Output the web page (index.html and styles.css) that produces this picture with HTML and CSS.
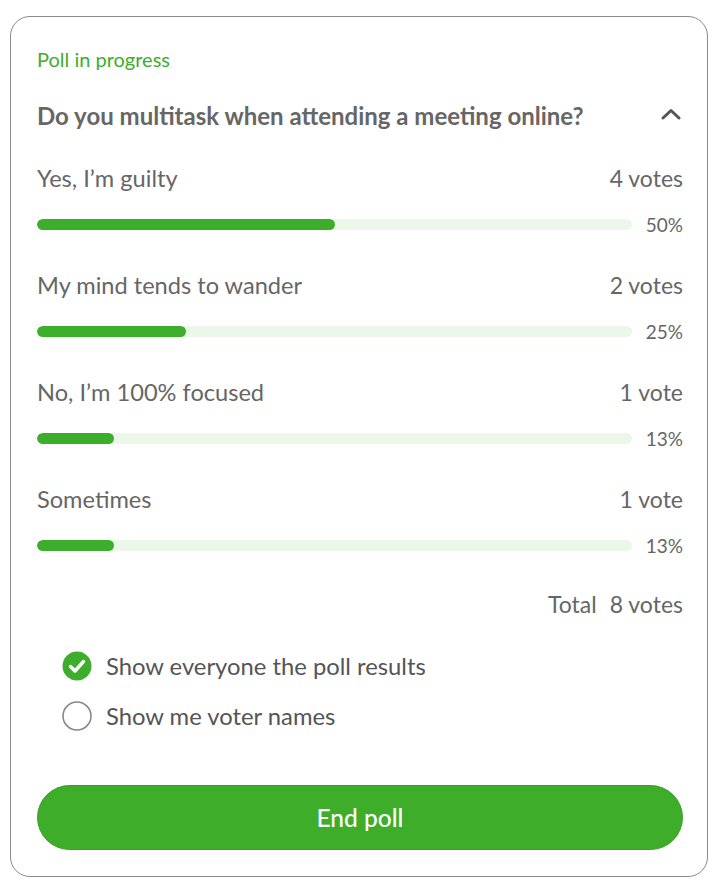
FILE: index.html
```html
<!DOCTYPE html>
<html lang="en">
<head>
<meta charset="utf-8">
<title>Poll</title>
<link rel="stylesheet" href="styles.css">
</head>
<body>
<div class="card">
  <div class="status">Poll in progress</div>
  <div class="question-row">
    <h2 class="question">Do you multitask when attending a meeting online?</h2>
    <svg class="chevron" width="20" height="12" viewBox="0 0 20 12"><path d="M2 10 L10 2.5 L18 10" fill="none" stroke="#555" stroke-width="3" stroke-linecap="round" stroke-linejoin="round"/></svg>
  </div>
  <ul class="options">
    <li class="option">
      <div class="option-head"><span>Yes, I’m guilty</span><span class="votes">4 votes</span></div>
      <div class="bar-row"><div class="track"><div class="fill" style="width:50%"></div></div><span class="pct">50%</span></div>
    </li>
    <li class="option">
      <div class="option-head"><span>My mind tends to wander</span><span class="votes">2 votes</span></div>
      <div class="bar-row"><div class="track"><div class="fill" style="width:25%"></div></div><span class="pct">25%</span></div>
    </li>
    <li class="option">
      <div class="option-head"><span>No, I’m 100% focused</span><span class="votes">1 vote</span></div>
      <div class="bar-row"><div class="track"><div class="fill" style="width:13%"></div></div><span class="pct">13%</span></div>
    </li>
    <li class="option">
      <div class="option-head"><span>Sometimes</span><span class="votes">1 vote</span></div>
      <div class="bar-row"><div class="track"><div class="fill" style="width:13%"></div></div><span class="pct">13%</span></div>
    </li>
  </ul>
  <div class="total"><span>Total</span><span>8 votes</span></div>
  <div class="settings">
    <label class="setting">
      <svg class="check" width="30" height="30" viewBox="0 0 30 30"><circle cx="15" cy="15" r="14.5" fill="#3dae2b"/><path d="M8.5 15.5 L13 20 L21.5 10.5" fill="none" stroke="#fff" stroke-width="3.4" stroke-linecap="round" stroke-linejoin="round"/></svg>
      <span>Show everyone the poll results</span>
    </label>
    <label class="setting">
      <svg class="check" width="30" height="30" viewBox="0 0 30 30"><circle cx="15" cy="15" r="14" fill="#fff" stroke="#888" stroke-width="1.6"/></svg>
      <span>Show me voter names</span>
    </label>
  </div>
  <button class="end-btn" type="button">End poll</button>
</div>
</body>
</html>
```

FILE: styles.css
```css
* { box-sizing: border-box; }
body {
  margin: 0;
  background: #fff;
  font-family: "Lato", "Noto Sans", sans-serif;
  color: #666;
}
.card {
  margin: 16px 14px 0 10px;
  width: 698px;
  height: 861px;
  border: 1.5px solid #8a8a8a;
  border-radius: 20px;
  padding: 30px 24px 0 26px;
  display: flex;
  flex-direction: column;
}
.status {
  color: #3dae2b;
  font-size: 20px;
  line-height: 24px;
}
.question-row {
  margin-top: 30px;
  display: flex;
  align-items: center;
  justify-content: space-between;
}
.question {
  margin: 0;
  font-size: 24px;
  line-height: 30px;
  font-weight: 700;
  color: #666;
}
.chevron { margin-right: 2px; margin-top: -4px; }
.options {
  list-style: none;
  margin: 32px 0 0;
  padding: 0;
  display: flex;
  flex-direction: column;
  gap: 35px;
}
.option-head {
  display: flex;
  justify-content: space-between;
  font-size: 23.6px;
  line-height: 30px;
}
.votes { font-size: 23px; }
.bar-row {
  margin-top: 20px;
  height: 22px;
  display: flex;
  align-items: center;
  gap: 12px;
}
.track {
  flex: 1;
  height: 11px;
  border-radius: 6px;
  background: #ebf8e9;
  overflow: hidden;
}
.fill {
  height: 100%;
  background: #3dae2b;
  border-radius: 6px;
}
.pct {
  width: 39px;
  text-align: right;
  font-size: 19px;
}
.total {
  margin-top: 33px;
  display: flex;
  justify-content: flex-end;
  gap: 13px;
  font-size: 23px;
  line-height: 30px;
}
.settings {
  margin-top: 32px;
  padding-left: 25px;
  display: flex;
  flex-direction: column;
  gap: 20px;
}
.setting {
  display: flex;
  align-items: center;
  gap: 14px;
  font-size: 23.8px;
  line-height: 30px;
  color: #555;
}
.end-btn {
  margin-top: 54px;
  height: 65px;
  width: 100%;
  border: 1px solid #3a9f2a;
  border-radius: 33px;
  background: #3eae2a;
  color: #fff;
  font-family: inherit;
  font-size: 24.5px;
  font-weight: 500;
}
```
